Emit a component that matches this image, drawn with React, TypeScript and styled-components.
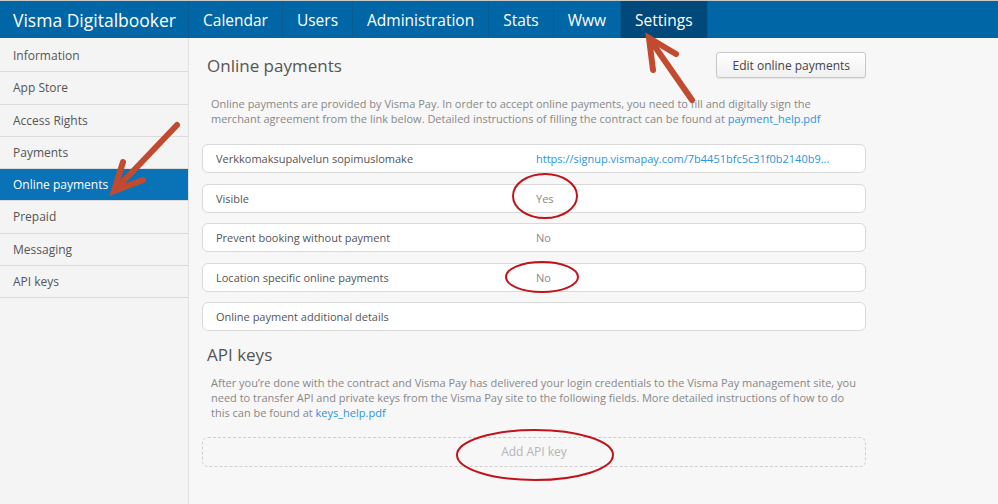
import styled, { createGlobalStyle } from 'styled-components';

const GlobalStyle = createGlobalStyle`
  html, body {
    margin: 0;
    padding: 0;
    background: #f7f7f7;
    font-family: 'Open Sans', 'Liberation Sans', sans-serif;
  }
`;

const Page = styled.div`
  position: relative;
  width: 998px;
  height: 504px;
  overflow: hidden;
  background: #f7f7f7;
`;

const TopBar = styled.nav`
  display: flex;
  height: 38px;
  background: #0066a5;
  border-top: 1px solid #c9c9c9;
  box-sizing: border-box;
`;

const Brand = styled.div`
  width: 189px;
  box-sizing: border-box;
  padding: 1px 0 0 13px;
  color: #fff;
  font-size: 17.5px;
  line-height: 36px;
  border-right: 1px solid #0a5b90;
`;

const NavItem = styled.a<{ active?: boolean }>`
  padding: 1px 14px 0;
  color: #fff;
  font-size: 15.5px;
  line-height: 36px;
  text-decoration: none;
  background: ${p => (p.active ? '#00497a' : 'transparent')};
  border-right: 1px solid #0a5b90;
`;

const Body = styled.div`
  display: flex;
  height: 466px;
`;

const Sidebar = styled.aside`
  width: 189px;
  box-sizing: border-box;
  background: #f4f4f4;
  border-right: 1px solid #e1e1e1;
  padding-top: 2px;
`;

const SideItem = styled.div<{ active?: boolean }>`
  height: 32.3px;
  box-sizing: border-box;
  padding-left: 13px;
  font-size: 12px;
  line-height: 31px;
  color: ${p => (p.active ? '#fff' : '#555')};
  background: ${p => (p.active ? '#0a72b6' : 'transparent')};
  border-bottom: 1px solid #dcdcdc;
`;

const Main = styled.main`
  width: 664px;
  padding: 14px 0 0 13px;
`;

const HeaderRow = styled.div`
  display: flex;
  justify-content: space-between;
  align-items: center;
  height: 26px;
  padding-left: 5px;
`;

const Title = styled.h2`
  margin: 0;
  font-weight: 400;
  font-size: 17px;
  color: #555;
`;

const Button = styled.button`
  height: 26px;
  padding: 0 15px;
  font-family: inherit;
  font-size: 12px;
  color: #444;
  background: linear-gradient(#ffffff, #f0f0f0);
  border: 1px solid #c8c8c8;
  border-radius: 3px;
  box-shadow: 0 1px 1px rgba(0, 0, 0, 0.08);
`;

const Description = styled.p<{ top: number }>`
  margin: ${p => p.top}px 0 0;
  padding-left: 9px;
  font-size: 11px;
  line-height: 15px;
  color: #888;
  white-space: nowrap;
`;

const Link = styled.a`
  color: #2a95dd;
  text-decoration: none;
`;

const Rows = styled.div`
  display: flex;
  flex-direction: column;
  gap: 10.5px;
  margin-top: 18px;
`;

const Row = styled.div`
  display: grid;
  grid-template-columns: 320px 1fr;
  align-items: center;
  height: 29px;
  box-sizing: border-box;
  padding: 0 13px;
  background: #fff;
  border: 1px solid #d9d9d9;
  border-radius: 6px;
  font-size: 11px;
  color: #555;
`;

const Value = styled.span`
  color: #888;
`;

const SubTitle = styled(Title)`
  margin-top: 12px;
  padding-left: 5px;
  line-height: 23px;
`;

const AddKey = styled.div`
  margin-top: 17px;
  height: 30px;
  box-sizing: border-box;
  border: 1px dashed #cfcfcf;
  border-radius: 6px;
  text-align: center;
  font-size: 12px;
  line-height: 28px;
  color: #b5b5b5;
`;

const Overlay = styled.svg`
  position: absolute;
  left: 0;
  top: 0;
  pointer-events: none;
`;

const sideItems = ['Information', 'App Store', 'Access Rights', 'Payments', 'Online payments', 'Prepaid', 'Messaging', 'API keys'];
const navItems = ['Calendar', 'Users', 'Administration', 'Stats', 'Www', 'Settings'];

const rows: { label: string; value?: string; link?: boolean }[] = [
  { label: 'Verkkomaksupalvelun sopimuslomake', value: 'https://signup.vismapay.com/7b4451bfc5c31f0b2140b9...', link: true },
  { label: 'Visible', value: 'Yes' },
  { label: 'Prevent booking without payment', value: 'No' },
  { label: 'Location specific online payments', value: 'No' },
  { label: 'Online payment additional details' },
];

export default function App() {
  return (
    <Page>
      <GlobalStyle />
      <TopBar>
        <Brand>Visma Digitalbooker</Brand>
        {navItems.map(item => (
          <NavItem key={item} active={item === 'Settings'}>{item}</NavItem>
        ))}
      </TopBar>

      <Body>
        <Sidebar>
          {sideItems.map(item => (
            <SideItem key={item} active={item === 'Online payments'}>{item}</SideItem>
          ))}
        </Sidebar>

        <Main>
          <HeaderRow>
            <Title>Online payments</Title>
            <Button>Edit online payments</Button>
          </HeaderRow>

          <Description top={18}>
            Online payments are provided by Visma Pay. In order to accept online payments, you need to fill and digitally sign the
            <br />
            merchant agreement from the link below. Detailed instructions of filling the contract can be found at{' '}
            <Link>payment_help.pdf</Link>
          </Description>

          <Rows>
            {rows.map(row => (
              <Row key={row.label}>
                <span>{row.label}</span>
                {row.link ? <Link>{row.value}</Link> : <Value>{row.value}</Value>}
              </Row>
            ))}
          </Rows>

          <SubTitle>API keys</SubTitle>
          <Description top={9}>
            After you’re done with the contract and Visma Pay has delivered your login credentials to the Visma Pay management site, you
            <br />
            need to transfer API and private keys from the Visma Pay site to the following fields. More detailed instructions of how to do
            <br />
            this can be found at <Link>keys_help.pdf</Link>
          </Description>

          <AddKey>Add API key</AddKey>
        </Main>
      </Body>

      {/* annotations drawn over the screenshot */}
      <Overlay width="998" height="504" viewBox="0 0 998 504">
        <g stroke="#c24a2e" strokeWidth="6" strokeLinecap="round" fill="none">
          <line x1="692" y1="100" x2="651" y2="41" />
          <polyline points="653,70 649,38 676,54" strokeLinejoin="miter" />
          <line x1="177" y1="125" x2="117" y2="188" />
          <polyline points="123,162 114,191 143,180" strokeLinejoin="miter" />
        </g>
        <g stroke="#c0141c" strokeWidth="2" fill="none">
          <ellipse cx="545" cy="196" rx="32" ry="22" />
          <ellipse cx="542" cy="277" rx="36" ry="15" />
          <ellipse cx="535" cy="455" rx="78" ry="25" />
        </g>
      </Overlay>
    </Page>
  );
}
